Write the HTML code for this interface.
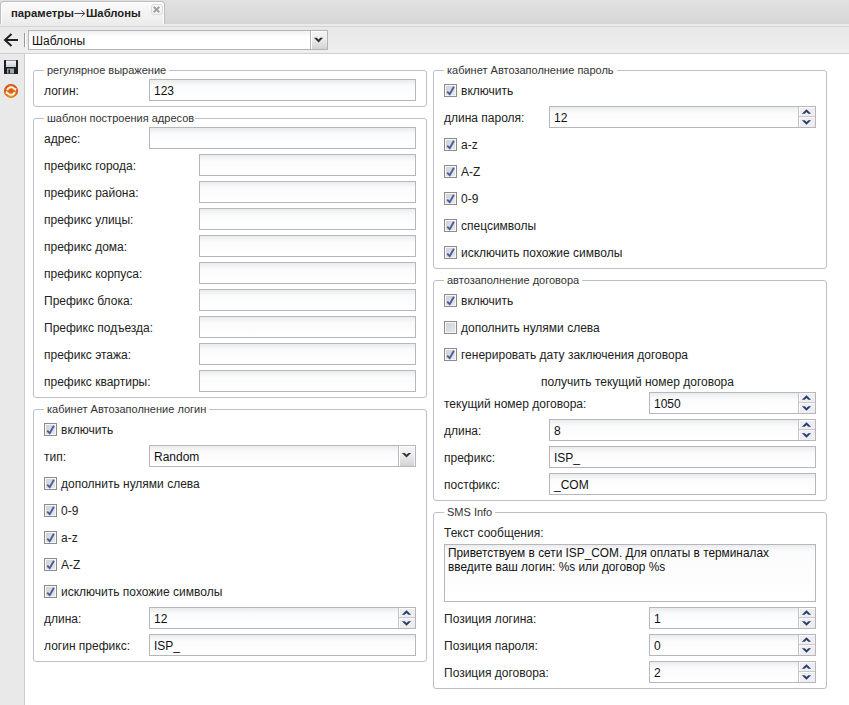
<!DOCTYPE html>
<html><head><meta charset="utf-8">
<style>
*{box-sizing:border-box}
html,body{margin:0;padding:0;width:849px;height:705px;overflow:hidden;background:#fff;font-family:"Liberation Sans",sans-serif;font-size:12px;color:#222}
.a{position:absolute}
#tabbar{left:0;top:0;width:849px;height:24px;background:linear-gradient(#e2e2e2,#d6d6d6)}
#tab{left:0;top:1px;width:165px;height:23px;border:1px solid #bdbdbd;border-bottom:none;border-radius:4px 4px 0 0;background:linear-gradient(#fbfbfb,#ececec);box-shadow:inset 1px 1px 0 #fff,inset -1px 0 0 #fff}
#tabt,#tabt2{left:11px;top:6px;font-weight:bold;font-size:11.3px;line-height:14px;color:#222;white-space:nowrap}
#tabt2{left:86px}
#tabx{left:151px;top:4px;width:12px;height:11px;border:1px solid #dcdcdc;border-radius:3px}
#toolbar{left:0;top:24px;width:849px;height:30px;background:linear-gradient(#ebebeb,#e8e8e8 20%,#efefef);border-bottom:1px solid #d0d0d0}
#tbline{left:0;top:26px;width:849px;height:1px;background:#d5d5d5}
#side{left:0;top:54px;width:25px;height:651px;background:#e9e9e9;border-right:1px solid #cdcdcd}
.fs{position:absolute;border:1px solid #bcbfc6;border-radius:3px}
.lg{position:absolute;background:#fff;font-size:11px;line-height:13px;color:#333;padding-left:3px;white-space:nowrap;height:13px}
.lb{position:absolute;height:22px;line-height:22px;white-space:nowrap;color:#222}
.tf{position:absolute;height:22px;border:1px solid #b6b6bc;background:linear-gradient(#e9ebed,#fbfbfc 6px,#fff);padding-left:4px;line-height:20px;color:#111;white-space:nowrap}
.tf span{display:block;line-height:22px;margin-top:0}
.cb{position:absolute;width:13px;height:13px;border:1px solid #8c8c8c;background:linear-gradient(135deg,#cdd0d4,#e6e8ec);box-shadow:inset 0 0 0 1px #f6f7f9}
.cb svg{position:absolute;left:0;top:0}
.spin{position:absolute;right:0;top:0;width:17px;height:20px;border-left:1px solid #c4c4ca;background:#eeeef0;border-top-right-radius:2px}
.spin svg{position:absolute;left:0;top:0}
.sel .dd{position:absolute;right:0;top:0;width:17px;height:20px;border-left:1px solid #b9b9bf;background:linear-gradient(#f4f4f4,#ededed 45%,#d3d3d3);box-shadow:inset 1px 1px 0 #fff,inset -1px 0 0 #f8f8f8}
.sel .dd svg{position:absolute;left:0;top:0}
.spin .su,.spin .sd{position:absolute;left:0;width:16px;height:10px;box-shadow:inset 1px 1px 0 #fbfbfc}
.spin .su{top:0;border-bottom:1px solid #c8c8ce}
.spin .sd{top:10px}
.ta{line-height:13.6px;padding:2.4px 0 0 3px;white-space:normal;font-size:11.85px}
</style></head><body>
<div id="tabbar" class="a"></div>
<div id="toolbar" class="a"></div><div id="tbline" class="a"></div><div id="tab" class="a"></div>
<div id="tabt" class="a">параметры</div><svg class="a" style="left:74px;top:9px" width="12" height="8" viewBox="0 0 12 8"><path d="M0.5 4.5H10.5M7.5 1.5L10.8 4.5L7.5 7.5" fill="none" stroke="#444" stroke-width="1"/></svg><div id="tabt2" class="a">Шаблоны</div>
<div id="tabx" class="a"><svg width="9" height="9" viewBox="0 0 9 9" style="position:absolute;left:0;top:0"><path d="M1.7 1.7L7.3 7.3M7.3 1.7L1.7 7.3" stroke="#a2a2a2" stroke-width="2"/></svg></div>

<svg class="a" style="left:0;top:26px" width="28" height="27" viewBox="0 0 28 27"><path d="M11.5 8L5 14L11.5 20M5 14H18" fill="none" stroke="#222" stroke-width="2"/><path d="M24.5 7V21" stroke="#9a9a9a" stroke-width="1"/><path d="M25.5 7V21" stroke="#fff" stroke-width="1"/></svg>
<div class="a" style="left:28px;top:30px;width:300px;height:20px;border:1px solid #b4b4bc;background:linear-gradient(#eef0f3,#fff 6px)"></div>
<div class="a" style="left:32px;top:31px;height:20px;line-height:20px;font-size:12px;color:#111">Шаблоны</div>
<div class="a" style="left:310px;top:31px;width:17px;height:18px;border-left:1px solid #b9b9bf;background:linear-gradient(#f4f4f4,#ededed 45%,#d3d3d3);box-shadow:inset 1px 1px 0 #fff"></div>
<svg class="a" style="left:311px;top:31px" width="16" height="18" viewBox="0 0 16 18"><path d="M2.9 6.7L5.8 6.7L7.55 8.5L9.3 6.7L12.2 6.7L7.55 11.4Z" fill="#333"/></svg>
<div id="side" class="a"></div>
<!-- floppy -->
<svg class="a" style="left:4px;top:60px" width="14" height="14" viewBox="0 0 14 14"><defs><linearGradient id="fg" x1="0" y1="0" x2="0" y2="1"><stop offset="0" stop-color="#f4f6f8"/><stop offset="1" stop-color="#c9d1da"/></linearGradient></defs><rect x="0" y="0" width="14" height="14" rx="0.5" fill="#1b1e24"/><rect x="2" y="0.5" width="10" height="6.5" fill="url(#fg)"/><rect x="3" y="8.5" width="7" height="5" fill="#a2a6aa"/><rect x="4.5" y="9.5" width="1.5" height="4" fill="#1b1e24"/></svg>
<!-- refresh -->
<svg class="a" style="left:3px;top:83px" width="16" height="16" viewBox="0 0 16 16"><defs><linearGradient id="og" x1="0" y1="0" x2="0" y2="1"><stop offset="0" stop-color="#d8683a"/><stop offset="0.25" stop-color="#e05a18"/><stop offset="0.7" stop-color="#e2661a"/><stop offset="1" stop-color="#f0b028"/></linearGradient></defs><circle cx="8" cy="7.9" r="7" fill="url(#og)"/><circle cx="8" cy="7.9" r="6.5" fill="none" stroke="#b84c1a" stroke-opacity="0.45" stroke-width="1"/><path d="M4.3 7.2A3.9 3.9 0 0 1 11.4 6.1" fill="none" stroke="#fff4d0" stroke-width="2"/><path d="M10 5.4L13.5 4.9L12.6 8.6Z" fill="#fff4d0"/><path d="M11.7 8.9A3.9 3.9 0 0 1 4.6 10" fill="none" stroke="#fff4d0" stroke-width="2"/><path d="M6 10.6L2.5 11.1L3.4 7.4Z" fill="#fff4d0"/></svg>

<div class="fs" style="left:33px;top:70px;width:394px;height:37px"></div>
<div class="lg" style="left:44px;top:64px;width:125px">регулярное выражение</div>
<div class="lb" style="left:44px;top:80px">логин:</div>
<div class="tf" style="left:149px;top:79px;width:267px"><span>123</span></div>
<div class="fs" style="left:33px;top:118px;width:394px;height:280px"></div>
<div class="lg" style="left:44px;top:112px;width:151px">шаблон построения адресов</div>
<div class="lb" style="left:44px;top:128px">адрес:</div>
<div class="tf" style="left:149px;top:127px;width:267px"></div>
<div class="lb" style="left:44px;top:155px">префикс города:</div>
<div class="tf" style="left:199px;top:154px;width:217px"></div>
<div class="lb" style="left:44px;top:182px">префикс района:</div>
<div class="tf" style="left:199px;top:181px;width:217px"></div>
<div class="lb" style="left:44px;top:209px">префикс улицы:</div>
<div class="tf" style="left:199px;top:208px;width:217px"></div>
<div class="lb" style="left:44px;top:236px">префикс дома:</div>
<div class="tf" style="left:199px;top:235px;width:217px"></div>
<div class="lb" style="left:44px;top:263px">префикс корпуса:</div>
<div class="tf" style="left:199px;top:262px;width:217px"></div>
<div class="lb" style="left:44px;top:290px">Префикс блока:</div>
<div class="tf" style="left:199px;top:289px;width:217px"></div>
<div class="lb" style="left:44px;top:317px">Префикс подъезда:</div>
<div class="tf" style="left:199px;top:316px;width:217px"></div>
<div class="lb" style="left:44px;top:344px">префикс этажа:</div>
<div class="tf" style="left:199px;top:343px;width:217px"></div>
<div class="lb" style="left:44px;top:371px">префикс квартиры:</div>
<div class="tf" style="left:199px;top:370px;width:217px"></div>
<div class="fs" style="left:33px;top:409px;width:394px;height:253px"></div>
<div class="lg" style="left:44px;top:403px;width:165px">кабинет Автозаполнение логин</div>
<div class="cb" style="left:44px;top:423px"><svg width="11" height="11" viewBox="0 0 11 11"><path d="M2.2 6.6L4.7 9.2L8.9 1.8" fill="none" stroke="#4a5f9c" stroke-width="1.9"/></svg></div><div class="lb" style="left:61px;top:419px">включить</div>
<div class="lb" style="left:44px;top:446px">тип:</div>
<div class="tf sel" style="left:149px;top:445px;width:267px"><span>Random</span><div class="dd"><svg width="16" height="20" viewBox="0 0 16 20"><path d="M2.9 6.9L5.7 6.9L7.5 8.7L9.3 6.9L12.1 6.9L7.5 11.5Z" fill="#333"/></svg></div></div>
<div class="cb" style="left:44px;top:477px"><svg width="11" height="11" viewBox="0 0 11 11"><path d="M2.2 6.6L4.7 9.2L8.9 1.8" fill="none" stroke="#4a5f9c" stroke-width="1.9"/></svg></div><div class="lb" style="left:61px;top:473px">дополнить нулями слева</div>
<div class="cb" style="left:44px;top:504px"><svg width="11" height="11" viewBox="0 0 11 11"><path d="M2.2 6.6L4.7 9.2L8.9 1.8" fill="none" stroke="#4a5f9c" stroke-width="1.9"/></svg></div><div class="lb" style="left:61px;top:500px">0-9</div>
<div class="cb" style="left:44px;top:531px"><svg width="11" height="11" viewBox="0 0 11 11"><path d="M2.2 6.6L4.7 9.2L8.9 1.8" fill="none" stroke="#4a5f9c" stroke-width="1.9"/></svg></div><div class="lb" style="left:61px;top:527px">a-z</div>
<div class="cb" style="left:44px;top:558px"><svg width="11" height="11" viewBox="0 0 11 11"><path d="M2.2 6.6L4.7 9.2L8.9 1.8" fill="none" stroke="#4a5f9c" stroke-width="1.9"/></svg></div><div class="lb" style="left:61px;top:554px">A-Z</div>
<div class="cb" style="left:44px;top:585px"><svg width="11" height="11" viewBox="0 0 11 11"><path d="M2.2 6.6L4.7 9.2L8.9 1.8" fill="none" stroke="#4a5f9c" stroke-width="1.9"/></svg></div><div class="lb" style="left:61px;top:581px">исключить похожие символы</div>
<div class="lb" style="left:44px;top:608px">длина:</div>
<div class="tf" style="left:149px;top:607px;width:267px"><span>12</span><div class="spin"><div class="su"><svg width="16" height="9" viewBox="0 0 16 9"><path d="M2.9 6.8L7.5 2.2L12.1 6.8L9.3 6.8L7.5 5.0L5.7 6.8Z" fill="#283d6e"/></svg></div><div class="sd"><svg width="16" height="10" viewBox="0 0 16 10"><path d="M2.9 3.2L5.7 3.2L7.5 5.0L9.3 3.2L12.1 3.2L7.5 7.8Z" fill="#283d6e"/></svg></div></div></div>
<div class="lb" style="left:44px;top:635px">логин префикс:</div>
<div class="tf" style="left:149px;top:634px;width:267px"><span>ISP_</span></div>
<div class="fs" style="left:433px;top:70px;width:394px;height:199px"></div>
<div class="lg" style="left:444px;top:64px;width:173px">кабинет Автозаполнение пароль</div>
<div class="cb" style="left:444px;top:84px"><svg width="11" height="11" viewBox="0 0 11 11"><path d="M2.2 6.6L4.7 9.2L8.9 1.8" fill="none" stroke="#4a5f9c" stroke-width="1.9"/></svg></div><div class="lb" style="left:461px;top:80px">включить</div>
<div class="lb" style="left:444px;top:107px">длина пароля:</div>
<div class="tf" style="left:549px;top:106px;width:267px"><span>12</span><div class="spin"><div class="su"><svg width="16" height="9" viewBox="0 0 16 9"><path d="M2.9 6.8L7.5 2.2L12.1 6.8L9.3 6.8L7.5 5.0L5.7 6.8Z" fill="#283d6e"/></svg></div><div class="sd"><svg width="16" height="10" viewBox="0 0 16 10"><path d="M2.9 3.2L5.7 3.2L7.5 5.0L9.3 3.2L12.1 3.2L7.5 7.8Z" fill="#283d6e"/></svg></div></div></div>
<div class="cb" style="left:444px;top:138px"><svg width="11" height="11" viewBox="0 0 11 11"><path d="M2.2 6.6L4.7 9.2L8.9 1.8" fill="none" stroke="#4a5f9c" stroke-width="1.9"/></svg></div><div class="lb" style="left:461px;top:134px">a-z</div>
<div class="cb" style="left:444px;top:165px"><svg width="11" height="11" viewBox="0 0 11 11"><path d="M2.2 6.6L4.7 9.2L8.9 1.8" fill="none" stroke="#4a5f9c" stroke-width="1.9"/></svg></div><div class="lb" style="left:461px;top:161px">A-Z</div>
<div class="cb" style="left:444px;top:192px"><svg width="11" height="11" viewBox="0 0 11 11"><path d="M2.2 6.6L4.7 9.2L8.9 1.8" fill="none" stroke="#4a5f9c" stroke-width="1.9"/></svg></div><div class="lb" style="left:461px;top:188px">0-9</div>
<div class="cb" style="left:444px;top:219px"><svg width="11" height="11" viewBox="0 0 11 11"><path d="M2.2 6.6L4.7 9.2L8.9 1.8" fill="none" stroke="#4a5f9c" stroke-width="1.9"/></svg></div><div class="lb" style="left:461px;top:215px">спецсимволы</div>
<div class="cb" style="left:444px;top:246px"><svg width="11" height="11" viewBox="0 0 11 11"><path d="M2.2 6.6L4.7 9.2L8.9 1.8" fill="none" stroke="#4a5f9c" stroke-width="1.9"/></svg></div><div class="lb" style="left:461px;top:242px">исключить похожие символы</div>
<div class="fs" style="left:433px;top:280px;width:394px;height:221px"></div>
<div class="lg" style="left:444px;top:274px;width:138px">автозаполнение договора</div>
<div class="cb" style="left:444px;top:294px"><svg width="11" height="11" viewBox="0 0 11 11"><path d="M2.2 6.6L4.7 9.2L8.9 1.8" fill="none" stroke="#4a5f9c" stroke-width="1.9"/></svg></div><div class="lb" style="left:461px;top:290px">включить</div>
<div class="cb" style="left:444px;top:321px"></div><div class="lb" style="left:461px;top:317px">дополнить нулями слева</div>
<div class="cb" style="left:444px;top:348px"><svg width="11" height="11" viewBox="0 0 11 11"><path d="M2.2 6.6L4.7 9.2L8.9 1.8" fill="none" stroke="#4a5f9c" stroke-width="1.9"/></svg></div><div class="lb" style="left:461px;top:344px">генерировать дату заключения договора</div>
<div class="lb" style="left:541px;top:371px">получить текущий номер договора</div>
<div class="lb" style="left:444px;top:393px">текущий номер договора:</div>
<div class="tf" style="left:649px;top:392px;width:167px"><span>1050</span><div class="spin"><div class="su"><svg width="16" height="9" viewBox="0 0 16 9"><path d="M2.9 6.8L7.5 2.2L12.1 6.8L9.3 6.8L7.5 5.0L5.7 6.8Z" fill="#283d6e"/></svg></div><div class="sd"><svg width="16" height="10" viewBox="0 0 16 10"><path d="M2.9 3.2L5.7 3.2L7.5 5.0L9.3 3.2L12.1 3.2L7.5 7.8Z" fill="#283d6e"/></svg></div></div></div>
<div class="lb" style="left:444px;top:420px">длина:</div>
<div class="tf" style="left:549px;top:419px;width:267px"><span>8</span><div class="spin"><div class="su"><svg width="16" height="9" viewBox="0 0 16 9"><path d="M2.9 6.8L7.5 2.2L12.1 6.8L9.3 6.8L7.5 5.0L5.7 6.8Z" fill="#283d6e"/></svg></div><div class="sd"><svg width="16" height="10" viewBox="0 0 16 10"><path d="M2.9 3.2L5.7 3.2L7.5 5.0L9.3 3.2L12.1 3.2L7.5 7.8Z" fill="#283d6e"/></svg></div></div></div>
<div class="lb" style="left:444px;top:447px">префикс:</div>
<div class="tf" style="left:549px;top:446px;width:267px"><span>ISP_</span></div>
<div class="lb" style="left:444px;top:474px">постфикс:</div>
<div class="tf" style="left:549px;top:473px;width:267px"><span>_COM</span></div>
<div class="fs" style="left:433px;top:512px;width:394px;height:177px"></div>
<div class="lg" style="left:444px;top:506px;width:51px">SMS Info</div>
<div class="lb" style="left:444px;top:522px">Текст сообщения:</div>
<div class="tf ta" style="left:444px;top:544px;width:372px;height:58px">Приветствуем в сети ISP_COM. Для оплаты в терминалах<br>введите ваш логин: %s или договор %s</div>
<div class="lb" style="left:444px;top:608px">Позиция логина:</div>
<div class="tf" style="left:649px;top:607px;width:167px"><span>1</span><div class="spin"><div class="su"><svg width="16" height="9" viewBox="0 0 16 9"><path d="M2.9 6.8L7.5 2.2L12.1 6.8L9.3 6.8L7.5 5.0L5.7 6.8Z" fill="#283d6e"/></svg></div><div class="sd"><svg width="16" height="10" viewBox="0 0 16 10"><path d="M2.9 3.2L5.7 3.2L7.5 5.0L9.3 3.2L12.1 3.2L7.5 7.8Z" fill="#283d6e"/></svg></div></div></div>
<div class="lb" style="left:444px;top:635px">Позиция пароля:</div>
<div class="tf" style="left:649px;top:634px;width:167px"><span>0</span><div class="spin"><div class="su"><svg width="16" height="9" viewBox="0 0 16 9"><path d="M2.9 6.8L7.5 2.2L12.1 6.8L9.3 6.8L7.5 5.0L5.7 6.8Z" fill="#283d6e"/></svg></div><div class="sd"><svg width="16" height="10" viewBox="0 0 16 10"><path d="M2.9 3.2L5.7 3.2L7.5 5.0L9.3 3.2L12.1 3.2L7.5 7.8Z" fill="#283d6e"/></svg></div></div></div>
<div class="lb" style="left:444px;top:662px">Позиция договора:</div>
<div class="tf" style="left:649px;top:661px;width:167px"><span>2</span><div class="spin"><div class="su"><svg width="16" height="9" viewBox="0 0 16 9"><path d="M2.9 6.8L7.5 2.2L12.1 6.8L9.3 6.8L7.5 5.0L5.7 6.8Z" fill="#283d6e"/></svg></div><div class="sd"><svg width="16" height="10" viewBox="0 0 16 10"><path d="M2.9 3.2L5.7 3.2L7.5 5.0L9.3 3.2L12.1 3.2L7.5 7.8Z" fill="#283d6e"/></svg></div></div></div>
</body></html>
